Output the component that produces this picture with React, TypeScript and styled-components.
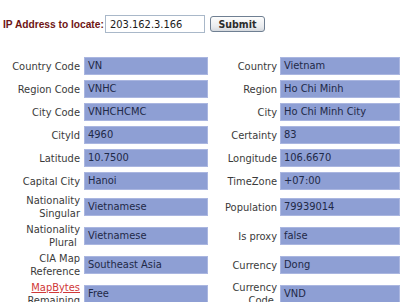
import React from 'react';
import styled, { createGlobalStyle } from 'styled-components';

const GlobalStyle = createGlobalStyle`
  body {
    margin: 0;
    background: #ffffff;
    font-family: 'DejaVu Sans', Verdana, sans-serif;
    font-stretch: condensed;
  }
`;

const Header = styled.div`
  display: flex;
  align-items: center;
  margin: 15px 0 0 3px;
  height: 18px;
`;

const HeaderLabel = styled.span`
  font-family: 'Liberation Sans', Arial, sans-serif;
  font-stretch: normal;
  font-weight: bold;
  font-size: 10.2px;
  color: #6e1414;
  width: 102px;
  white-space: nowrap;
`;

const IpInput = styled.input`
  box-sizing: border-box;
  width: 100px;
  height: 18px;
  margin: 0;
  padding: 0 0 0 4px;
  border: 1px solid #a9b8c9;
  font-family: 'DejaVu Sans', sans-serif;
  font-stretch: condensed;
  font-size: 11px;
  color: #1a1a1a;
  background: #ffffff;
  outline: none;
`;

const SubmitButton = styled.button`
  box-sizing: border-box;
  margin-left: 5px;
  width: 55px;
  height: 16px;
  padding: 0;
  border: 1px solid #6f7f92;
  border-radius: 3px;
  background: linear-gradient(#fdfdfd, #e9ebee 70%, #d5d9de);
  font-family: 'DejaVu Sans', sans-serif;
  font-stretch: condensed;
  font-weight: bold;
  font-size: 10.5px;
  color: #2c2c2c;
`;

const Table = styled.div`
  display: grid;
  grid-template-columns: 81px 124px 66px 120px;
  column-gap: 3px;
  row-gap: 3px;
  margin-top: 23px;
  align-items: center;
`;

const Label = styled.div<{ $tall?: boolean; $right?: boolean }>`
  height: ${p => (p.$tall ? '26px' : '20px')};
  display: flex;
  align-items: center;
  justify-content: flex-end;
  padding-right: ${p => (p.$right ? '0' : '1px')};
  font-size: 11px;
  line-height: 13px;
  color: #3a3a3a;
  white-space: nowrap;
`;

const LabelText = styled.span`
  text-align: right;
  white-space: pre;
`;

const Bar = styled.div`
  box-sizing: border-box;
  height: 18px;
  padding-left: 3px;
  background: #8e9fd4;
  border: 1px solid #aab6e0;
  font-size: 11px;
  line-height: 16px;
  color: #1f2947;
  white-space: nowrap;
  overflow: hidden;
`;

const MapLink = styled.a`
  color: #d03838;
  text-decoration: underline;
`;

interface Field {
  label: React.ReactNode;
  value: string;
  tall?: boolean;
}

const rows: [Field, Field][] = [
  [{ label: 'Country Code', value: 'VN' }, { label: 'Country', value: 'Vietnam' }],
  [{ label: 'Region Code', value: 'VNHC' }, { label: 'Region', value: 'Ho Chi Minh' }],
  [{ label: 'City Code', value: 'VNHCHCMC' }, { label: 'City', value: 'Ho Chi Minh City' }],
  [{ label: 'CityId', value: '4960' }, { label: 'Certainty', value: '83' }],
  [{ label: 'Latitude', value: '10.7500' }, { label: 'Longitude', value: '106.6670' }],
  [{ label: 'Capital City', value: 'Hanoi' }, { label: 'TimeZone', value: '+07:00' }],
  [
    { label: <>Nationality<br />Singular</>, value: 'Vietnamese', tall: true },
    { label: 'Population', value: '79939014', tall: true },
  ],
  [
    { label: <>Nationality<br />Plural </>, value: 'Vietnamese', tall: true },
    { label: 'Is proxy', value: 'false', tall: true },
  ],
  [
    { label: <>CIA Map<br />Reference</>, value: 'Southeast Asia', tall: true },
    { label: 'Currency', value: 'Dong', tall: true },
  ],
  [
    { label: <><MapLink href="#">MapBytes</MapLink><br />Remaining</>, value: 'Free', tall: true },
    { label: <>Currency<br />Code </>, value: 'VND', tall: true },
  ],
];

export default function App() {
  return (
    <>
      <GlobalStyle />
      <Header>
        <HeaderLabel>IP Address to locate:</HeaderLabel>
        <IpInput defaultValue="203.162.3.166" />
        <SubmitButton>Submit</SubmitButton>
      </Header>
      <Table>
        {rows.map((pair, i) => (
          <React.Fragment key={i}>
            {pair.map((f, j) => (
              <React.Fragment key={j}>
                <Label $tall={f.tall} $right={j === 1}>
                  <LabelText>{f.label}</LabelText>
                </Label>
                <Bar>{f.value}</Bar>
              </React.Fragment>
            ))}
          </React.Fragment>
        ))}
      </Table>
    </>
  );
}
